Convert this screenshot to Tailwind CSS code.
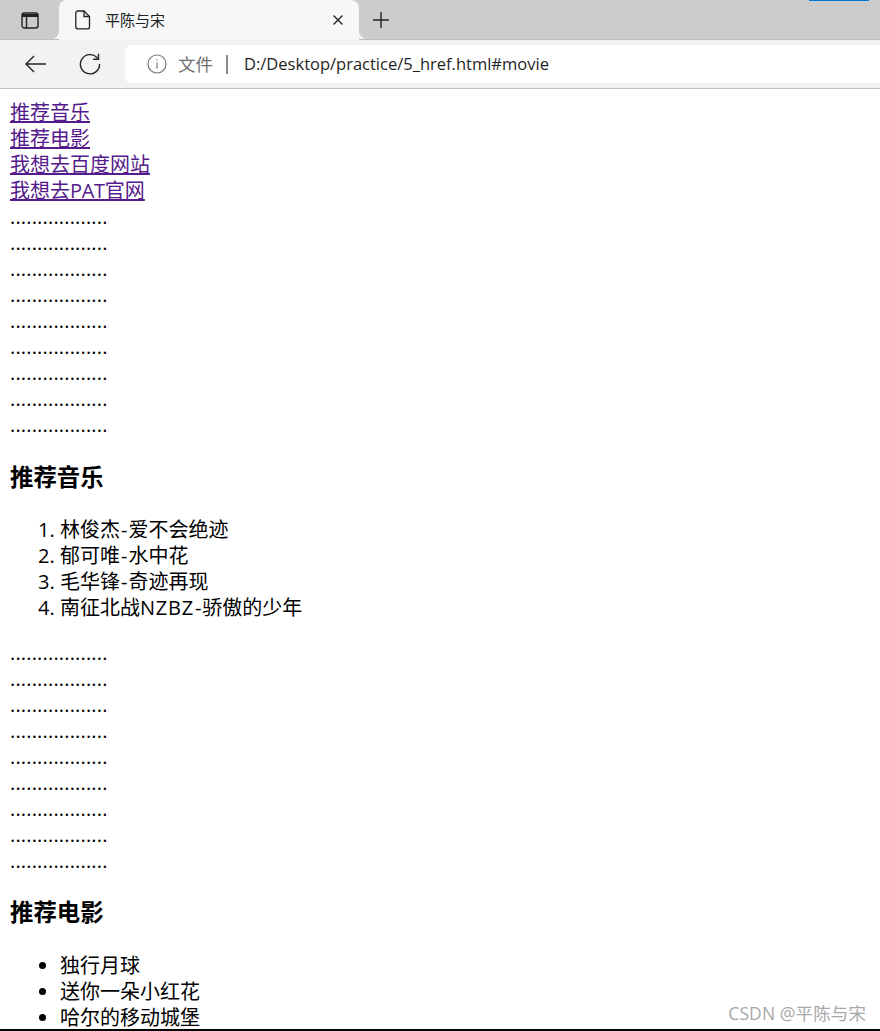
<!DOCTYPE html>
<html lang="zh-CN">
<head>
<meta charset="utf-8">
<title>平陈与宋</title>
<script src="https://cdn.jsdelivr.net/npm/@tailwindcss/browser@4"></script>
</head>
<body class="relative h-[1031px] overflow-hidden bg-white font-['Open_Sans','Noto_Sans_CJK_SC',sans-serif] text-black">
<header class="h-[89px] border-b border-[#c4c4c4]">
  <div class="relative flex h-10 border-b border-[#bdbdbd] bg-[#cccccc]">
    <div class="relative flex w-[59px] items-center justify-center">
      <svg width="18" height="18" viewBox="0 0 18 18" fill="none" stroke="#222" stroke-width="1.4"><rect x="1" y="2" width="16" height="15" rx="2.5"/><path d="M1 4.500h16" stroke-width="3"/><path d="M5.500 6v11"/></svg>
      <div class="absolute bottom-0 right-0 size-2 bg-[#f7f7f7]"><div class="size-full rounded-br-lg bg-[#cccccc]"></div></div>
    </div>
    <div class="-mb-px flex w-[300px] items-center rounded-t-lg bg-[#f7f7f7] pl-4 pr-[15px]">
      <svg width="16" height="20" viewBox="0 0 16 20" fill="none" stroke="#222" stroke-width="1.3"><path d="M2.800 1h6.200l5.500 5.500v10.200a2.200 2.200 0 0 1-2.200 2.200H2.800A2.200 2.200 0 0 1 .8 16.700V3A2 2 0 0 1 2.800 1Z"/><path d="M9 1v5.500h5.500"/></svg>
      <span class="ml-[14px] text-[15px] text-[#222]">平陈与宋</span>
      <svg class="ml-auto" width="12" height="12" viewBox="0 0 12 12" stroke="#222" stroke-width="1.4"><path d="M1.500 1.500l9 9M10.500 1.500l-9 9"/></svg>
    </div>
    <div class="relative flex w-11 items-center justify-center">
      <svg width="18" height="18" viewBox="0 0 18 18" stroke="#222" stroke-width="1.4"><path d="M9 1v16M1 9h16"/></svg>
      <div class="absolute bottom-0 left-0 size-2 bg-[#f7f7f7]"><div class="size-full rounded-bl-lg bg-[#cccccc]"></div></div>
    </div>
    <div class="absolute right-[11px] top-0 h-px w-[60px] bg-[#0078d4]"></div>
  </div>
  <div class="flex h-12 items-center bg-[#f2f2f2] pl-[25px]">
    <svg width="21" height="18" viewBox="0 0 21 18" fill="none" stroke="#222" stroke-width="1.4"><path d="M1 9h20M9 1 1 9l8 8"/></svg>
    <svg class="ml-[33px]" width="22" height="22" viewBox="0 0 22 22" fill="none" stroke="#222" stroke-width="1.4"><path d="M18.500 5.200A9.600 9.600 0 1 0 20.600 11"/><path d="M19.500 .8v5.400h-5.400"/></svg>
    <div class="ml-[24px] flex h-[38px] flex-1 items-center rounded-l-md bg-white pl-[22px]">
      <svg width="20" height="20" viewBox="0 0 20 20" fill="none" stroke="#777" stroke-width="1.200"><circle cx="10" cy="10" r="9"/><path d="M10 8.500v6M10 5.200v1.400"/></svg>
      <span class="ml-[11px] text-[17.500px] text-[#6f6f6f]">文件</span>
      <span class="ml-[13px] h-[19px] w-[2px] bg-[#8a8a8a]"></span>
      <span class="ml-[16px] text-[16.500px] text-[#1f1f1f]">D:/Desktop/practice/5_href.html#movie</span>
    </div>
  </div>
</header>
<main class="px-[10px] pt-[11px] text-[20px] leading-[26px]">
  <div class="flex flex-col items-start text-[#551a8b]">
    <a href="#music" class="underline decoration-2 underline-offset-[1px]">推荐音乐</a>
    <a href="#movie" class="underline decoration-2 underline-offset-[1px]">推荐电影</a>
    <a href="#baidu" class="underline decoration-2 underline-offset-[1px]">我想去百度网站</a>
    <a href="#pat" class="underline decoration-2 underline-offset-[1px]">我想去<span class="tracking-[-0.3px]">PAT</span>官网</a>
  </div>
  <div class="tracking-[0.17px]">
  <div>..................</div><div>..................</div><div>..................</div><div>..................</div><div>..................</div><div>..................</div><div>..................</div><div>..................</div><div>..................</div>
  </div>
  <h3 class="mt-[20px] mb-[21px] text-[23.400px] font-bold leading-[38px]">推荐音乐</h3>
  <ol class="list-decimal pl-[50px]">
    <li>林俊杰<span class="px-px">-</span>爱不会绝迹</li>
    <li>郁可唯<span class="px-px">-</span>水中花</li>
    <li>毛华锋<span class="px-px">-</span>奇迹再现</li>
    <li>南征北战<span class="tracking-[0.75px]">NZBZ</span><span class="px-px">-</span>骄傲的少年</li>
  </ol>
  <div class="mt-[19px] tracking-[0.17px]">
  <div>..................</div><div>..................</div><div>..................</div><div>..................</div><div>..................</div><div>..................</div><div>..................</div><div>..................</div><div>..................</div>
  </div>
  <h3 class="mt-[19px] mb-[22px] text-[23.400px] font-bold leading-[38px]">推荐电影</h3>
  <ul class="list-disc pl-[50px]">
    <li>独行月球</li>
    <li>送你一朵小红花</li>
    <li>哈尔的移动城堡</li>
  </ul>
</main>
<div class="absolute right-[14px] top-[1000px] text-[17.500px] tracking-[0.1px] text-[#a8a8a8]">CSDN @平陈与宋</div>
<div class="absolute inset-x-0 bottom-0 h-0.5 bg-black"></div>
</body>
</html>
